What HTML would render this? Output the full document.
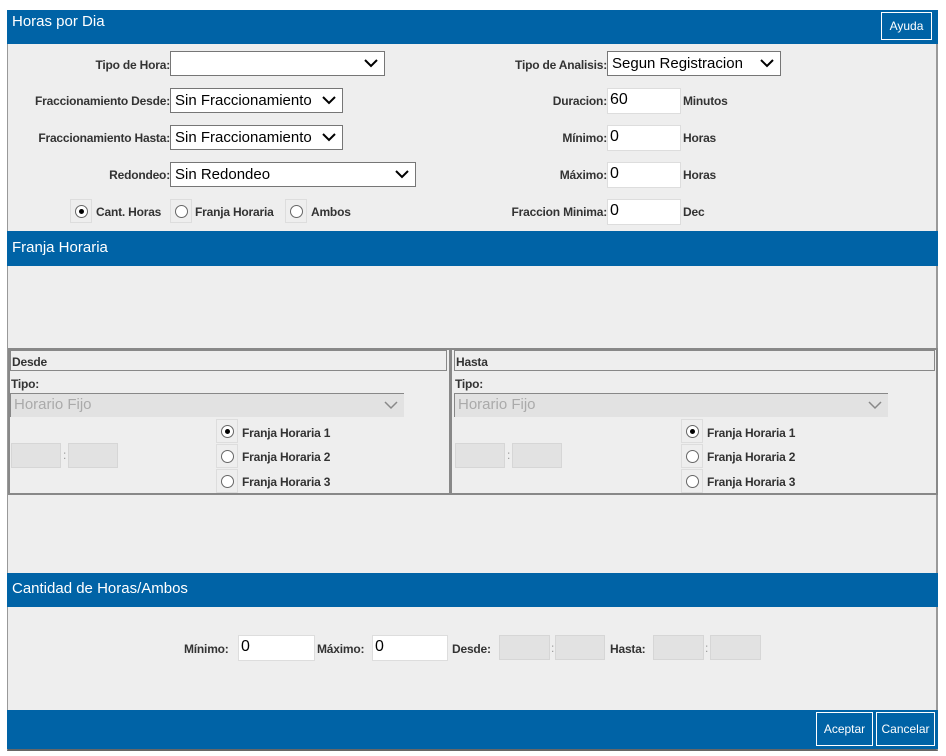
<!DOCTYPE html>
<html><head><style>
*{box-sizing:border-box;margin:0;padding:0}
body{width:946px;height:756px;background:#fff;font-family:"Liberation Sans",sans-serif;position:relative;overflow:hidden}
.a{position:absolute}
.bar{position:absolute;left:7px;width:931px;background:#0063a6;color:#fff;font-size:15px;padding-left:5px}
.lbl{position:absolute;font-size:12px;font-weight:bold;color:#333;white-space:nowrap;letter-spacing:-0.2px}
.r{text-align:right}
.sel{position:absolute;background:#fff;border:1px solid #767676;height:25px;font-size:15px;padding:3px 4px;color:#000;white-space:nowrap}
.sel svg{position:absolute;right:6px;top:7px}
.inp{position:absolute;background:#fff;border:1px solid #ddd;height:26px;font-size:16px;padding:2px 2px;color:#000}
.dis{position:absolute;background:#e2e2e2;border:1px solid #d6d6d6;height:25px}
.rb{position:absolute;width:22px;height:24px;border:1px solid #ddd}
.rb i{position:absolute;left:4px;top:5px;width:13px;height:13px;border:1px solid #666;border-radius:50%;background:#fff}
.rb i.on::after{content:"";position:absolute;left:3px;top:3px;width:5px;height:5px;border-radius:50%;background:#000}
.btn{position:absolute;border:1px solid #fff;color:#fff;font-size:12px;text-align:center;background:#0063a6}
</style></head><body>
<div class="a" style="left:7px;top:10px;width:931px;height:741px;background:#eeeeee;border-left:1px solid #999;border-right:2px solid #999;border-bottom:2px solid #666"></div>
<div class="bar" style="top:10px;height:34px;line-height:24px">Horas por Dia</div>
<div class="btn" style="left:881px;top:12px;width:51px;height:28px;line-height:26px">Ayuda</div>

<div class="lbl r" style="left:20px;width:150px;top:58px">Tipo de Hora:</div>
<div class="sel" style="left:170px;top:51px;width:215px"><svg width="14" height="9"><path d="M1 1l6 6 6-6" stroke="#000" stroke-width="2" fill="none"/></svg></div>
<div class="lbl r" style="left:10px;width:160px;top:94px">Fraccionamiento Desde:</div>
<div class="sel" style="left:170px;top:88px;width:173px">Sin Fraccionamiento<svg width="14" height="9"><path d="M1 1l6 6 6-6" stroke="#000" stroke-width="2" fill="none"/></svg></div>
<div class="lbl r" style="left:10px;width:160px;top:131px">Fraccionamiento Hasta:</div>
<div class="sel" style="left:170px;top:125px;width:173px">Sin Fraccionamiento<svg width="14" height="9"><path d="M1 1l6 6 6-6" stroke="#000" stroke-width="2" fill="none"/></svg></div>
<div class="lbl r" style="left:10px;width:160px;top:168px">Redondeo:</div>
<div class="sel" style="left:170px;top:162px;width:246px">Sin Redondeo<svg width="14" height="9"><path d="M1 1l6 6 6-6" stroke="#000" stroke-width="2" fill="none"/></svg></div>

<div class="rb" style="left:70px;top:199px"><i class="on"></i></div>
<div class="lbl" style="left:96px;top:205px">Cant. Horas</div>
<div class="rb" style="left:170px;top:199px"><i></i></div>
<div class="lbl" style="left:195px;top:205px">Franja Horaria</div>
<div class="rb" style="left:285px;top:199px"><i></i></div>
<div class="lbl" style="left:311px;top:205px">Ambos</div>

<div class="lbl r" style="left:450px;width:157px;top:58px">Tipo de Analisis:</div>
<div class="sel" style="left:607px;top:51px;width:174px">Segun Registracion<svg width="14" height="9"><path d="M1 1l6 6 6-6" stroke="#000" stroke-width="2" fill="none"/></svg></div>
<div class="lbl r" style="left:450px;width:157px;top:94px">Duracion:</div>
<div class="inp" style="left:607px;top:88px;width:74px">60</div><div class="lbl" style="left:683px;top:94px">Minutos</div>
<div class="lbl r" style="left:450px;width:157px;top:131px">Mínimo:</div>
<div class="inp" style="left:607px;top:125px;width:74px">0</div><div class="lbl" style="left:683px;top:131px">Horas</div>
<div class="lbl r" style="left:450px;width:157px;top:168px">Máximo:</div>
<div class="inp" style="left:607px;top:162px;width:74px">0</div><div class="lbl" style="left:683px;top:168px">Horas</div>
<div class="lbl r" style="left:450px;width:157px;top:205px">Fraccion Minima:</div>
<div class="inp" style="left:607px;top:199px;width:74px">0</div><div class="lbl" style="left:683px;top:205px">Dec</div>

<div class="bar" style="top:231px;height:35px;line-height:33px">Franja Horaria</div>

<div class="a" style="left:8px;top:348px;width:443px;height:147px;border:2px solid #888"></div>
<div class="a" style="left:10px;top:350px;width:437px;height:21px;border:1px solid #888"></div>
<div class="lbl" style="left:12px;top:355px">Desde</div>
<div class="lbl" style="left:11px;top:377px">Tipo:</div>
<div class="a" style="left:10px;top:393px;width:394px;height:24px;background:#e2e2e2;border-left:1px solid #888;border-top:1px solid #888;color:#aaa;font-size:15px;padding:2px 3px">Horario Fijo<svg style="position:absolute;right:6px;top:7px" width="14" height="9"><path d="M1 1l6 6 6-6" stroke="#888" stroke-width="1.5" fill="none"/></svg></div>
<div class="dis" style="left:11px;top:443px;width:50px"></div><div class="lbl" style="left:63px;top:448px;color:#999;font-weight:normal">:</div>
<div class="dis" style="left:68px;top:443px;width:50px"></div>
<div class="rb" style="left:216px;top:419px"><i class="on"></i></div><div class="lbl" style="left:242px;top:426px">Franja Horaria 1</div>
<div class="rb" style="left:216px;top:444px"><i></i></div><div class="lbl" style="left:242px;top:450px">Franja Horaria 2</div>
<div class="rb" style="left:216px;top:469px"><i></i></div><div class="lbl" style="left:242px;top:475px">Franja Horaria 3</div>

<div class="a" style="left:450px;top:348px;width:488px;height:147px;border:2px solid #888"></div>
<div class="a" style="left:454px;top:350px;width:481px;height:21px;border:1px solid #888"></div>
<div class="lbl" style="left:456px;top:355px">Hasta</div>
<div class="lbl" style="left:455px;top:377px">Tipo:</div>
<div class="a" style="left:454px;top:393px;width:434px;height:24px;background:#e2e2e2;border-left:1px solid #888;border-top:1px solid #888;color:#aaa;font-size:15px;padding:2px 3px">Horario Fijo<svg style="position:absolute;right:6px;top:7px" width="14" height="9"><path d="M1 1l6 6 6-6" stroke="#888" stroke-width="1.5" fill="none"/></svg></div>
<div class="dis" style="left:455px;top:443px;width:50px"></div><div class="lbl" style="left:507px;top:448px;color:#999;font-weight:normal">:</div>
<div class="dis" style="left:512px;top:443px;width:50px"></div>
<div class="rb" style="left:681px;top:419px"><i class="on"></i></div><div class="lbl" style="left:707px;top:426px">Franja Horaria 1</div>
<div class="rb" style="left:681px;top:444px"><i></i></div><div class="lbl" style="left:707px;top:450px">Franja Horaria 2</div>
<div class="rb" style="left:681px;top:469px"><i></i></div><div class="lbl" style="left:707px;top:475px">Franja Horaria 3</div>

<div class="bar" style="top:573px;height:34px;line-height:32px">Cantidad de Horas/Ambos</div>

<div class="lbl" style="left:184px;top:642px">Mínimo:</div>
<div class="inp" style="left:238px;top:635px;width:77px">0</div>
<div class="lbl" style="left:317px;top:642px">Máximo:</div>
<div class="inp" style="left:372px;top:635px;width:76px">0</div>
<div class="lbl" style="left:452px;top:642px">Desde:</div>
<div class="dis" style="left:499px;top:635px;width:51px"></div><div class="lbl" style="left:551px;top:641px;color:#999;font-weight:normal">:</div>
<div class="dis" style="left:555px;top:635px;width:50px"></div>
<div class="lbl" style="left:610px;top:642px">Hasta:</div>
<div class="dis" style="left:653px;top:635px;width:51px"></div><div class="lbl" style="left:705px;top:641px;color:#999;font-weight:normal">:</div>
<div class="dis" style="left:710px;top:635px;width:51px"></div>

<div class="bar" style="top:710px;height:39px"></div>
<div class="btn" style="left:816px;top:712px;width:57px;height:34px;line-height:32px">Aceptar</div>
<div class="btn" style="left:876px;top:712px;width:59px;height:34px;line-height:32px">Cancelar</div>
</body></html>
